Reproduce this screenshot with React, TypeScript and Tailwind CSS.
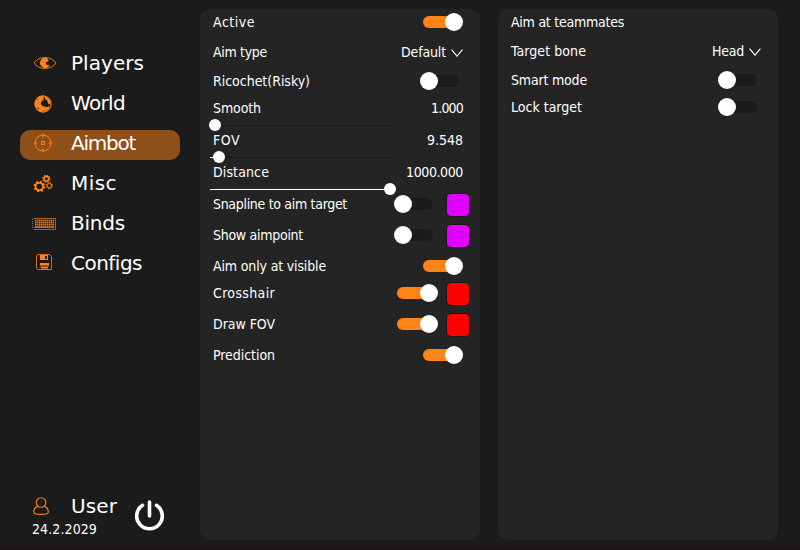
import { useLayoutEffect, useRef, useState } from "react";
import type { ReactNode } from "react";

/* Text set to an exact width by spreading its letter spacing. */
function Label({ text, width, className = "" }: { text: string; width: number; className?: string }) {
  const ref = useRef<HTMLSpanElement>(null);
  const [spacing, setSpacing] = useState(0);
  useLayoutEffect(() => {
    if (!ref.current) return;
    const natural = ref.current.getBoundingClientRect().width;
    setSpacing((width - natural) / text.length);
  }, [text, width]);
  return (
    <span ref={ref} className={`block w-max whitespace-nowrap ${className}`} style={{ letterSpacing: spacing }}>
      {text}
    </span>
  );
}

function Toggle({ on, long = false }: { on: boolean; long?: boolean }) {
  return on ? (
    <div className="flex h-[18px] items-center">
      <div className={`-mr-[14px] h-3 rounded-full bg-[#ff8316] ${long ? "w-[37px]" : "w-9"}`} />
      <div className="size-[18px] shrink-0 rounded-full bg-white" />
    </div>
  ) : (
    <div className="flex h-[18px] w-10 items-center">
      <div className="z-10 size-[18px] shrink-0 rounded-full bg-white" />
      <div className="-ml-[13px] h-3 w-[34px] rounded-full bg-[#1b1b1b]" />
    </div>
  );
}

function Row({ text, width, height, children }: { text: string; width: number; height: string; children?: ReactNode }) {
  return (
    <div className={`flex items-center justify-between ${height}`}>
      <Label text={text} width={width} />
      <div className="flex items-center">{children}</div>
    </div>
  );
}

function Chevron() {
  return (
    <svg className="mt-0.5 ml-[5px] h-2 w-3" viewBox="0 0 12 8" fill="none" stroke="#fff" strokeWidth="1.1">
      <path d="M.6.7 6 7.2 11.4.7" />
    </svg>
  );
}

function Swatch({ color }: { color: string }) {
  return <div className={`mt-0.5 size-6 rounded-[5px] border border-[#171717] ${color}`} />;
}

function Slider({ text, width, value, valueWidth, fill, pad }: { text: string; width: number; value: string; valueWidth: number; fill: string; pad: string }) {
  return (
    <div className="h-8">
      <div className="flex h-[18px] items-center justify-between pr-[17px]">
        <Label text={text} width={width} />
        <Label text={value} width={valueWidth} />
      </div>
      <div className="mt-0.5 -ml-[3px] flex h-3 w-[182px] items-center">
        <div className={`h-px shrink-0 bg-white ${fill}`} />
        <div className={`z-10 size-3 shrink-0 rounded-full bg-white ${pad}`} />
        <div className="h-px flex-1 bg-[#191919]" />
      </div>
    </div>
  );
}

const stroke = { fill: "none", stroke: "#ff8316" } as const;

function EyeIcon() {
  return (
    <svg className="h-3.5 w-6" viewBox="0 0 24 14">
      <path d="M1 7C6-.3 18-.3 23 7 18 14.3 6 14.3 1 7Z" {...stroke} strokeWidth="1" opacity=".85" />
      <path d="M13.6 1.8A5.2 5.2 0 1 0 17 8.6c-1.3 1.1-3.7.8-4-1-.2-1.5 1-2.4 2.6-2.1-.2-1.7-.8-3-2-3.7Z" fill="#ff8316" />
    </svg>
  );
}

function GlobeIcon() {
  return (
    <svg className="size-[18px]" viewBox="0 0 18 18">
      <circle cx="9" cy="9" r="8.1" {...stroke} strokeWidth="1.1" />
      <path d="M8 .8C3.5 1 1 4.5 1 8.5c0 1.6.4 2.8 1.2 4 1.3 2.2 3.8 4.2 6.6 4.5l2-1.5.2-2-1.5-2-2-1.5-.8-2 1.5-2.2 2-.7L9 3.5l1.8-1.3L8 .8Z" fill="#ff8316" />
      <path d="m11 1.5 3.4 2 2.2 3.5-1 2.5-1.6-1-.8-3L11 4Zm-1 9.5 2.8 1.2 1.9-.8 1 .8-1.7 2.5-3 1.5Z" fill="#ff8316" />
      <path d="m2.5 4 1.8 1M3 13l2.3.7" stroke="#1b1b1b" strokeWidth=".7" />
    </svg>
  );
}

function TargetIcon() {
  return (
    <svg className="size-[18px]" viewBox="0 0 18 18" {...stroke}>
      <circle cx="9" cy="9" r="8" strokeWidth="1" />
      <rect x="7.5" y="7.5" width="3" height="3" strokeWidth=".9" />
      <path d="M9 0v3.5M9 14.5V18M0 9h3.5M14.5 9H18" strokeWidth="1.2" />
    </svg>
  );
}

function Gear({ cx, cy, r, w }: { cx: number; cy: number; r: number; w: number }) {
  const c = 2 * Math.PI * (r + w / 2 + 0.4);
  return (
    <g fill="none" stroke="#ff8316">
      <circle cx={cx} cy={cy} r={r} strokeWidth={w} />
      <circle cx={cx} cy={cy} r={r + w / 2 + 0.4} strokeWidth="1.3" strokeDasharray={`${c / 16} ${c / 16}`} />
    </g>
  );
}

function GearsIcon() {
  return (
    <svg className="h-[18px] w-5" viewBox="0 0 20 18">
      <Gear cx={6.3} cy={11.5} r={3.8} w={2} />
      <Gear cx={13.3} cy={3.7} r={2.3} w={1.6} />
      <Gear cx={16.3} cy={10.7} r={2.1} w={0.9} />
    </svg>
  );
}

function KeyboardIcon() {
  return (
    <svg className="h-3 w-6" viewBox="0 0 24 12" {...stroke}>
      <path d="M1.5.5h22v11H1.5" strokeWidth="1" opacity=".65" />
      <path d="M.5 1v10" strokeDasharray="1 1" opacity=".7" />
      <path d="M3 2.5h19M3 4.5h19M3 6.5h19M3 8.5h19" strokeWidth="1.5" strokeDasharray="1.5 .5" opacity=".9" />
      <path d="M2 9.5h20" strokeWidth="1" opacity=".7" />
    </svg>
  );
}

function DiskIcon() {
  return (
    <svg className="size-4" viewBox="0 0 16 16">
      <path d="M1.5.5h12l2 2v13h-14l-1-1v-13Z" {...stroke} opacity=".8" />
      <path d="M4 1h8v5H4z" fill="#ff8316" />
      <path d="M9 2h2v3H9z" fill="#1b1b1b" />
      <path d="M4 9h9v2H4zM4 11.5h9v1H4zM5 13h7v1H5zM5 14.5h7v1H5z" fill="#ff8316" />
    </svg>
  );
}

function UserIcon() {
  return (
    <svg className="h-[18px] w-4" viewBox="0 0 16 18" {...stroke} strokeWidth="1.1">
      <circle cx="8" cy="5.5" r="4.8" />
      <path d="M4.7 9C2.2 10.5.6 12.5.6 15c0 1.5 3 2.4 7.4 2.4s7.4-.9 7.4-2.4c0-2.5-1.6-4.5-4.1-6" />
    </svg>
  );
}

const nav = [
  { text: "Players", width: 73, icon: <EyeIcon />, pad: "pl-[13px] pb-1" },
  { text: "World", width: 54, icon: <GlobeIcon />, pad: "pl-3.5 pb-0.5" },
  { text: "Aimbot", width: 64, icon: <TargetIcon />, pad: "pl-3.5 pb-1" },
  { text: "Misc", width: 46, icon: <GearsIcon />, pad: "pl-[13px] pb-0.5" },
  { text: "Binds", width: 54, icon: <KeyboardIcon />, pad: "pl-3 pb-0.5" },
  { text: "Configs", width: 71, icon: <DiskIcon />, pad: "pl-4 pb-1.5" },
];

export default function App() {
  return (
    <div className="flex h-[550px] w-[800px] overflow-hidden border-b-4 border-[#191519] bg-[#1b1b1b] font-['DejaVu_Sans_Condensed','DejaVu_Sans',sans-serif] text-sm leading-[18px] text-white">
      <aside className="flex w-[200px] shrink-0 flex-col pl-5">
        <nav className="flex flex-col gap-2.5 pt-[50px] font-['DejaVu_Sans',sans-serif]">
          {nav.map(({ text, width, icon, pad }) => (
            <div key={text} className={`flex h-[30px] w-40 items-center rounded-[10px] ${text === "Aimbot" ? "bg-[#8e4f19]" : ""}`}>
              <div className={`w-[51px] shrink-0 ${pad}`}>{icon}</div>
              <Label text={text} width={width} className="-mt-1 text-xl" />
            </div>
          ))}
        </nav>
        <div className="mt-auto flex pb-2">
          <div className="w-[114px] pl-3">
            <div className="flex h-6 items-center">
              <div className="w-[39px] pl-px"><UserIcon /></div>
              <Label text="User" width={46} className="font-['DejaVu_Sans',sans-serif] text-xl" />
            </div>
            <Label text="24.2.2029" width={65} className="mt-0.5" />
          </div>
          <svg className="mt-[5px] h-8 w-[31px]" viewBox="0 0 31 32" fill="none" stroke="#fff" strokeWidth="3.6" strokeLinecap="round">
            <path d="M15.5 3v14M8.5 6.3a12.8 12.8 0 1 0 14 0" />
          </svg>
        </div>
      </aside>

      <main className="flex gap-[18px] pt-[9px]">
        <section className="h-[531px] w-[280px] rounded-[10px] bg-[#242424] pl-[13px]">
          <div className="pr-[17px]">
            <Row text="Active" width={42} height="h-[26px]"><Toggle on /></Row>
            <Row text="Aim type" width={54} height="h-[34px]"><Label text="Default" width={45} /><Chevron /></Row>
            <Row text="Ricochet(Risky)" width={97} height="h-6"><div className="pr-[3px]"><Toggle on={false} /></div></Row>
          </div>
          <div className="pt-1.5">
            <Slider text="Smooth" width={48} value="1.000" valueWidth={32} fill="w-0" pad="-ml-px" />
            <Slider text="FOV" width={27} value="9.548" valueWidth={36} fill="w-[3px]" pad="" />
            <Slider text="Distance" width={56} value="1000.000" valueWidth={57} fill="w-[174px]" pad="" />
          </div>
          <div className="pr-[10px]">
            <Row text="Snapline to aim target" width={134} height="h-[18px]"><div className="pr-3"><Toggle on={false} /></div><Swatch color="bg-[#e100ff]" /></Row>
            <Row text="Show aimpoint" width={90} height="h-11"><div className="pr-3"><Toggle on={false} /></div><Swatch color="bg-[#e100ff]" /></Row>
            <Row text="Aim only at visible" width={113} height="h-[18px]"><div className="pr-[7px]"><Toggle on /></div></Row>
            <Row text="Crosshair" width={62} height="h-9"><div className="pr-2"><Toggle on long /></div><Swatch color="bg-[#ff0000]" /></Row>
            <Row text="Draw FOV" width={62} height="h-[26px]"><div className="pr-2"><Toggle on long /></div><Swatch color="bg-[#ff0000]" /></Row>
            <Row text="Prediction" width={62} height="h-9"><div className="pr-[7px]"><Toggle on /></div></Row>
          </div>
        </section>

        <section className="h-[531px] w-[280px] rounded-[10px] bg-[#242424] pr-[17px] pl-[13px]">
          <Row text="Aim at teammates" width={113} height="h-[26px]" />
          <Row text="Target bone" width={75} height="h-8"><Label text="Head" width={32} /><Chevron /></Row>
          <Row text="Smart mode" width={76} height="h-[26px]"><div className="pr-[3px]"><Toggle on={false} /></div></Row>
          <Row text="Lock target" width={71} height="h-7"><div className="pr-[3px]"><Toggle on={false} /></div></Row>
        </section>
      </main>
    </div>
  );
}
